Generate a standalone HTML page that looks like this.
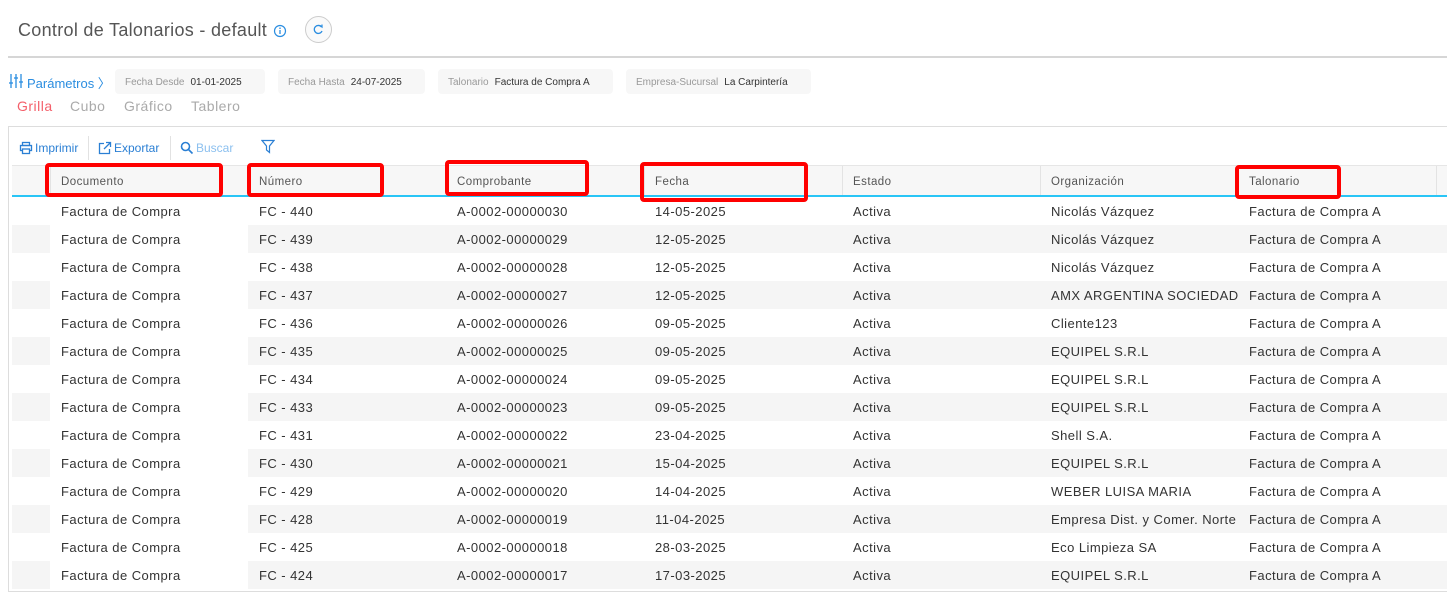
<!DOCTYPE html>
<html><head><meta charset="utf-8"><style>
*{box-sizing:border-box;margin:0;padding:0}
body{width:1447px;height:607px;background:#fff;font-family:"Liberation Sans",sans-serif;position:relative;overflow:hidden;color:#333}
.abs{position:absolute;white-space:nowrap}
.title{left:18px;top:20px;font-size:18px;color:#555;letter-spacing:0.3px}
.chip{position:absolute;top:69px;height:25px;background:#f7f7f7;border-radius:4px;font-size:10px;line-height:27px;padding-left:10px;white-space:nowrap}
.chip span{color:#999;margin-right:6px}
.tab{top:98px;font-size:14px;color:#aaa;letter-spacing:0.5px}
.tb{top:141px;font-size:12px;color:#2a7fd4}
.cell{position:absolute;font-size:13px;letter-spacing:0.45px;color:#333;white-space:nowrap}
.red{position:absolute;border:4px solid #f00;border-radius:4px}
</style></head><body>
<div class="abs title">Control de Talonarios - default</div>
<svg class="abs" style="left:273px;top:24px" width="14" height="14" viewBox="0 0 14 14"><circle cx="7" cy="7" r="5.5" fill="none" stroke="#2a8de0" stroke-width="1.2"/><line x1="7" y1="6" x2="7" y2="10" stroke="#2a8de0" stroke-width="1.3"/><circle cx="7" cy="4.2" r="0.8" fill="#2a8de0"/></svg>
<div class="abs" style="left:305px;top:16px;width:27px;height:27px;border:1px solid #ccc;border-radius:50%;background:#fafafa"></div>
<svg class="abs" style="left:311px;top:22px" width="15" height="15" viewBox="0 0 15 15"><path d="M10.5 5 A4 4 0 1 0 11 9" fill="none" stroke="#2a8de0" stroke-width="1.3"/><path d="M9 3.5 L11 5 L11 2.5" fill="none" stroke="#2a8de0" stroke-width="1.2"/></svg>
<div class="abs" style="left:8px;top:56px;width:1439px;height:2px;background:#d6d6d6"></div>
<svg class="abs" style="left:8px;top:73px" width="16" height="16" viewBox="0 0 16 16" stroke="#2a8de0" stroke-width="1.3"><line x1="3" y1="1" x2="3" y2="15"/><line x1="8" y1="1" x2="8" y2="15"/><line x1="13" y1="1" x2="13" y2="15"/><line x1="1" y1="10" x2="5" y2="10"/><line x1="6" y1="5" x2="10" y2="5"/><line x1="11" y1="9" x2="15" y2="9"/></svg>
<div class="abs" style="left:27px;top:73px;font-size:13px;color:#2a8de0">Parámetros 〉</div>
<div class="chip" style="left:115px;width:150px"><span>Fecha Desde</span>01-01-2025</div>
<div class="chip" style="left:278px;width:147px"><span>Fecha Hasta</span>24-07-2025</div>
<div class="chip" style="left:438px;width:175px"><span>Talonario</span>Factura de Compra A</div>
<div class="chip" style="left:626px;width:185px"><span>Empresa-Sucursal</span>La Carpintería</div>
<div class="abs tab" style="left:17px;color:#f4606b">Grilla</div>
<div class="abs tab" style="left:70px">Cubo</div>
<div class="abs tab" style="left:124px">Gráfico</div>
<div class="abs tab" style="left:191px">Tablero</div>
<div class="abs" style="left:8px;top:126px;width:1445px;height:466px;border:1px solid #ddd"></div>
<svg class="abs" style="left:19px;top:141px" width="14" height="14" viewBox="0 0 14 14" fill="none" stroke="#2a7fd4" stroke-width="1.3"><rect x="3.5" y="1.5" width="7" height="3"/><rect x="1.5" y="4.5" width="11" height="5"/><rect x="3.5" y="8" width="7" height="4.5" fill="#fff"/></svg>
<div class="abs tb" style="left:35px">Imprimir</div>
<div class="abs" style="left:88px;top:136px;width:1px;height:24px;background:#e2e2e2"></div>
<svg class="abs" style="left:98px;top:141px" width="14" height="14" viewBox="0 0 14 14" fill="none" stroke="#2a7fd4" stroke-width="1.3"><path d="M6 2.5H1.5V12.5H11.5V8"/><path d="M8 1.5H12.5V6M12.5 1.5L6 8"/></svg>
<div class="abs tb" style="left:114px">Exportar</div>
<div class="abs" style="left:170px;top:136px;width:1px;height:24px;background:#e2e2e2"></div>
<svg class="abs" style="left:180px;top:141px" width="14" height="14" viewBox="0 0 14 14" fill="none" stroke="#2a7fd4" stroke-width="1.6"><circle cx="5.5" cy="5.5" r="4"/><line x1="8.5" y1="8.5" x2="12.5" y2="12.5"/></svg>
<div class="abs tb" style="left:196px;color:#8cc0ef">Buscar</div>
<svg class="abs" style="left:261px;top:139px" width="14" height="15" viewBox="0 0 14 15" fill="none" stroke="#2a7fd4" stroke-width="1.2"><path d="M1 1.5H13L8.5 7V13.5L5.5 11V7Z"/></svg>
<div class="abs" style="left:12px;top:165px;width:1435px;height:32px;background:#f7f7f7;border-top:1px solid #e6e6e6;border-bottom:2px solid #29c5f6"></div>
<div id="t"></div>
<script>
var cols=[50,248,446,644,842,1040,1238];
var hd=["Documento","Número","Comprobante","Fecha","Estado","Organización","Talonario"];
var h="";
cols.forEach(function(x,i){h+='<div class="abs" style="left:'+x+'px;top:166px;width:1px;height:29px;background:#e3e3e3"></div>';h+='<div class="cell" style="left:'+(x+11)+'px;top:176px;font-size:11.5px;color:#555">'+hd[i]+'</div>';});
h+='<div class="abs" style="left:1436px;top:166px;width:1px;height:29px;background:#e3e3e3"></div>';
var rows=[["440","30","14-05-2025","Nicolás Vázquez"],["439","29","12-05-2025","Nicolás Vázquez"],["438","28","12-05-2025","Nicolás Vázquez"],["437","27","12-05-2025","AMX ARGENTINA SOCIEDAD"],["436","26","09-05-2025","Cliente123"],["435","25","09-05-2025","EQUIPEL S.R.L"],["434","24","09-05-2025","EQUIPEL S.R.L"],["433","23","09-05-2025","EQUIPEL S.R.L"],["431","22","23-04-2025","Shell S.A."],["430","21","15-04-2025","EQUIPEL S.R.L"],["429","20","14-04-2025","WEBER LUISA MARIA"],["428","19","11-04-2025","Empresa Dist. y Comer. Norte"],["425","18","28-03-2025","Eco Limpieza SA"],["424","17","17-03-2025","EQUIPEL S.R.L"]];
rows.forEach(function(r,i){var y=197+i*28;
if(i%2==1){h+='<div class="abs" style="left:12px;top:'+y+'px;width:38px;height:28px;background:#f5f5f5"></div><div class="abs" style="left:248px;top:'+y+'px;width:1199px;height:28px;background:#f5f5f5"></div>';}
var v=["Factura de Compra","FC - "+r[0],"A-0002-000000"+r[1],r[2],"Activa",r[3],"Factura de Compra A"];
v.forEach(function(t,j){h+='<div class="cell" style="left:'+(cols[j]+11)+'px;top:'+(y+7)+'px;'+(j==5?'width:188px;overflow:hidden':'')+'">'+t+'</div>';});});
var red=[[45,163,178,34],[247,163,137,34],[445,160,144,36],[640,162,168,40],[1235,165,106,34]];
red.forEach(function(b){h+='<div class="red" style="left:'+b[0]+'px;top:'+b[1]+'px;width:'+b[2]+'px;height:'+b[3]+'px"></div>';});
document.getElementById("t").innerHTML=h;
</script>
</body></html>
